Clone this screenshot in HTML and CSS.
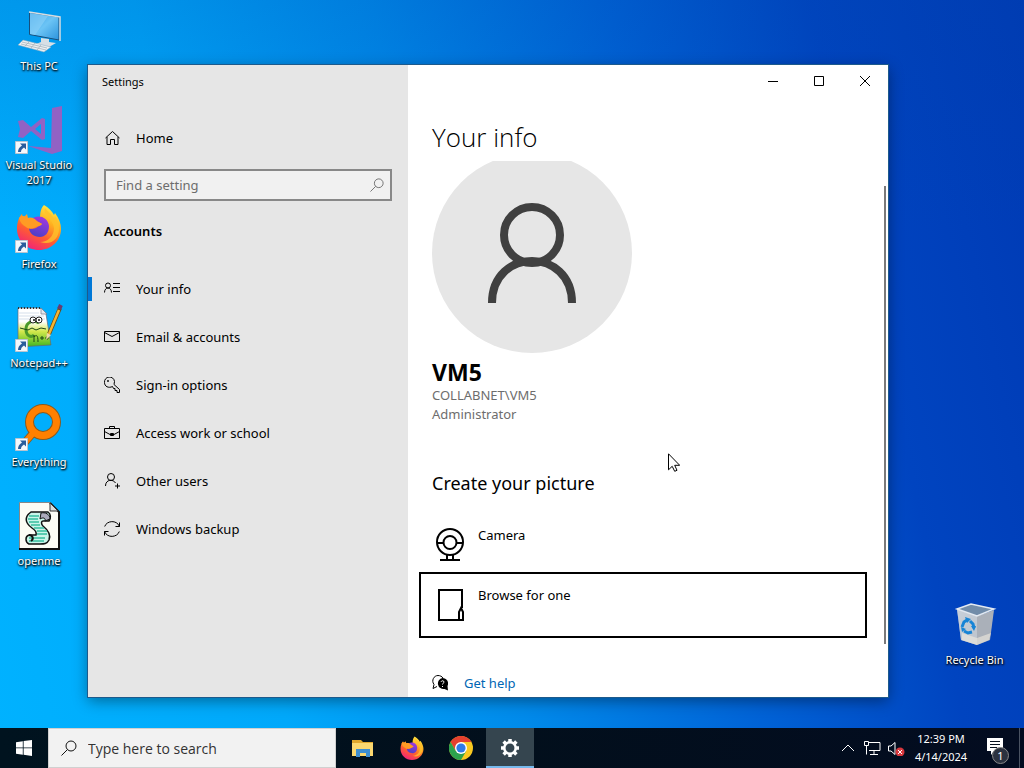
FILE: index.html
```
<!DOCTYPE html>
<html lang="en">
<head>
  <meta charset="UTF-8">
  <meta name="viewport" content="width=device-width, initial-scale=1.0">
  <title>Settings</title>
  <link rel="stylesheet" href="styles.css">
</head>
<body>

  <!-- Shared icons -->
  <svg class="defs" aria-hidden="true">
    <defs>
      <linearGradient id="ffBody" x1="0.8" y1="0" x2="0.3" y2="1">
        <stop offset="0" stop-color="#fff04a"/>
        <stop offset="0.35" stop-color="#ffb01f"/>
        <stop offset="0.65" stop-color="#ff5f2f"/>
        <stop offset="1" stop-color="#f0217c"/>
      </linearGradient>
      <linearGradient id="ffGlobe" x1="0.7" y1="0" x2="0.3" y2="1">
        <stop offset="0" stop-color="#a238e0"/>
        <stop offset="1" stop-color="#4a3fc4"/>
      </linearGradient>
      <linearGradient id="pcScreen" x1="0" y1="0" x2="1" y2="1">
        <stop offset="0" stop-color="#2f9be4"/>
        <stop offset="0.5" stop-color="#6cc4f5"/>
        <stop offset="1" stop-color="#2b93dc"/>
      </linearGradient>
      <linearGradient id="binSide" x1="0" y1="0" x2="1" y2="1">
        <stop offset="0" stop-color="#c3cfdd"/>
        <stop offset="1" stop-color="#a3a8b0"/>
      </linearGradient>
      <linearGradient id="nppPage" x1="0" y1="0" x2="0" y2="1">
        <stop offset="0.35" stop-color="#ffffff"/>
        <stop offset="0.6" stop-color="#d3e84c"/>
        <stop offset="1" stop-color="#3fb51f"/>
      </linearGradient>
    </defs>
    <symbol id="firefox" viewBox="0 0 46 46">
      <path fill="url(#ffBody)" d="M28 1c5 3 8 6 10 10l1-2c4 5 6 11 6 16 0 12-10 21-22 21S1 37 1 25C1 18 3 13 6 10l1 4 4-4 1 4c5-1 8 0 12 3 0-6 0-12 4-16z"/>
      <path fill="url(#ffGlobe)" d="M16 15c6-5 16-2 17 7 0 7-4 11-9 11-6 0-11-4-11-9 2 1 5 1 7 0 2-2 5-2 6-4-3-2-6-2-10-5z"/>
      <path fill="#ff9b24" d="M3 14c3-3 6-2 9 0 3-1 7 0 9 3l5 3c-2 2-6 2-8 4-3 1-6 1-8-1-4-2-6-5-7-9z"/>
      <path fill="#ffc12a" opacity="0.8" d="M29 4c-3 7 8 10 9 20 0 8-6 14-14 14 12 4 19-4 19-13 0-6-2-10-4-13l-1 3c-2-5-6-7-9-11z"/>
    </symbol>
    <symbol id="shortcut" viewBox="0 0 13 13">
      <path fill="#f4f8fc" stroke="#b9c4cf" stroke-width="1" d="M.5.5h12v12H.5z"/>
      <path fill="#2a5d9c" d="M5 2.500h6v6L9 6.500C6.500 8 6 9.500 6 11H3C3 8.500 4 6.500 7 4.500z"/>
    </symbol>
    <symbol id="search" viewBox="0 0 16 16">
      <circle cx="10" cy="6" r="5" fill="none" stroke="currentColor"/>
      <path d="M6.500 9.500.5 15.500" stroke="currentColor" fill="none"/>
    </symbol>
  </svg>

  <main class="desktop">
    <div class="shortcuts">
      <a class="shortcut" href="#">
        <svg viewBox="0 0 48 48">
          <path fill="url(#pcScreen)" stroke="#174f7d" d="M14.500 4.500 44 9v23l-29.500-5.500z"/>
          <path fill="none" stroke="#d6dde2" stroke-width="1.500" d="M14 4l31 5v24"/>
          <path fill="#8fd2f8" opacity="0.600" d="M15 5l18 3-13 19-5-1z"/>
          <path fill="#d7dfe5" d="M26 30l8 1v3l7 1-7 4-13-3 5-2z"/>
          <path fill="#eceff1" stroke="#8aa9bd" stroke-width="0.500" d="M8 32 36 39l-7 5L3 37z"/>
          <path stroke="#a6b4bd" stroke-width="0.800" d="M7 34l25 6M6 36l25 6M14 34l-4 4M20 35l-4 5M26 37l-4 5" fill="none"/>
        </svg>
        <span>This PC</span>
      </a>
      <a class="shortcut" href="#">
        <svg viewBox="0 0 48 48">
          <path fill="#9162c4" d="M37 1l10-2v45l-10 3-24-8 23 2z"/>
          <path fill="#9162c4" fill-rule="evenodd" d="M3 14l5-1 8 7 11-9 3 1v20l-3 1-11-9-8 7-5-1 2-8zM20 22l6 5V17z"/>
          <use href="#shortcut" x="0" y="34" width="13" height="13"/>
        </svg>
        <span>Visual Studio 2017</span>
      </a>
      <a class="shortcut" href="#">
        <svg viewBox="0 0 48 48">
          <use href="#firefox" x="1" y="-2" width="46" height="46"/>
          <use href="#shortcut" x="0" y="34" width="13" height="13"/>
        </svg>
        <span>Firefox</span>
      </a>
      <a class="shortcut" href="#">
        <svg viewBox="0 0 48 48">
          <path fill="url(#nppPage)" stroke="#667" stroke-width="0.700" d="M3 3h22l6 6 5 31-33 2z"/>
          <path fill="#e4e9ef" stroke="#778" stroke-width="0.700" d="M26 3v6h6z"/>
          <path stroke="#333" stroke-width="2" stroke-dasharray="1 2" d="M3 3h22"/>
          <path stroke="#b9c9dd" stroke-width="0.600" d="M4 8h20M4 11h25M4 14h26"/>
          <path fill="none" stroke="#4b9a2a" stroke-width="3" d="M24 18c-5-4-13-1-13 6s5 9 8 6"/>
          <circle cx="18" cy="15" r="3" fill="#fff" stroke="#222"/>
          <circle cx="24" cy="15" r="3" fill="#fff" stroke="#222"/>
          <circle cx="19" cy="15" r="1" fill="#111"/>
          <circle cx="24" cy="15" r="1" fill="#111"/>
          <path fill="none" stroke="#1d4716" d="M5 23l8 2 4-2 4 2 5-2 5 1M19 37v-7M19 32c3-3 4-1 4 5M25 33h4M27 31v4M30 33h4M32 31v4"/>
          <path stroke="#6e4a12" stroke-width="4" d="M34 29 45 3"/>
          <path stroke="#f4b633" stroke-width="2.500" d="M34 29 44 5"/>
          <path stroke="#6a3b70" stroke-width="4" d="M44 4l2-4"/>
          <path fill="#f3d9a5" d="M32 28l4 2-5 5z"/>
          <use href="#shortcut" x="0" y="34" width="13" height="13"/>
        </svg>
        <span>Notepad++</span>
      </a>
      <a class="shortcut" href="#">
        <svg viewBox="0 0 48 48">
          <path stroke="#8c5a1c" stroke-width="8" d="M18 29 6 43"/>
          <circle cx="28" cy="18" r="13.500" fill="none" stroke="#8c5a1c" stroke-width="9"/>
          <path stroke="#ff8000" stroke-width="6" d="M19 28 6 43"/>
          <circle cx="28" cy="18" r="13.500" fill="none" stroke="#ff8000" stroke-width="7"/>
          <use href="#shortcut" x="0" y="34" width="13" height="13"/>
        </svg>
        <span>Everything</span>
      </a>
      <a class="shortcut" href="#">
        <svg viewBox="0 0 48 48">
          <path fill="#fcfcf5" stroke="#888" d="M4.500-.5h31l8 9v37h-39z"/>
          <path fill="none" stroke="#111" stroke-width="2" d="M35 0l9 9v37H4"/>
          <path fill="#ddd" stroke="#333" d="M35 0v8h8z"/>
          <path fill="#c9f5ea" stroke="#111" stroke-width="1.500" d="M16 9h17c3 2 3 6 1 9h-6c-2 0-2 3 0 5 5 4 8 9 6 14-2 4-5 4-9 4H14c-4-2-4-8 0-9h7c1-3-1-5-4-7-7-5-8-11-1-16z"/>
          <path fill="#aab" stroke="#111" d="M26 10c4-1 9 1 9 6l-5 2c1-3-2-4-5-2z"/>
          <path stroke="#36bd9f" stroke-width="1.500" d="M14 13h10M13 16h10M14 19h10M16 22h9M19 25h10M22 28h10M22 31h10M14 35h16M14 38h15"/>
          <path stroke="#111" stroke-width="2" fill="none" d="M14 32c4 0 5 4 2 6"/>
        </svg>
        <span>openme</span>
      </a>
    </div>

    <a class="shortcut recycle-bin" href="#">
      <svg viewBox="0 0 48 48">
        <path fill="url(#binSide)" d="M6 7 26 14v29L10 38z"/>
        <path fill="#aab0b9" d="M26 14 43 8l-4 30-13 5z"/>
        <path fill="#c9d0d8" d="M6 7 26 14v29L10 38z" opacity="0.700"/>
        <path fill="#718ca9" stroke="#e2e9f1" stroke-width="1.500" d="M6 7 20 2l23 5-17 7z"/>
        <path fill="#f0ebe0" opacity="0.600" d="M11 31l15 5 14-5-2 7-12 5-15-5z"/>
        <path fill="none" stroke="#1684d6" stroke-width="3" d="M11 25l2-5 3-2M19 19l3 3 1 4M21 30l-4 1-4-2"/>
        <path fill="#1684d6" d="M14 15l6 2-4 4zM20 24h5l-2 5zM10 25l5 2-4 3z"/>
      </svg>
      <span>Recycle Bin</span>
    </a>

    <!-- Settings window -->
    <section class="window">
      <aside class="sidebar">
        <div class="window-title">Settings</div>
        <a class="nav-item" href="#">
          <svg viewBox="0 0 16 16"><path d="M1.500 8 8.500 1.500 15.500 8M3 7v7.500h3.500v-5h4v5H14V7"/></svg>
          Home
        </a>
        <div class="find">
          <input type="text" placeholder="Find a setting" aria-label="Find a setting">
          <svg><use href="#search"/></svg>
        </div>
        <h2>Accounts</h2>
        <nav>
          <a class="nav-item active" href="#">
            <svg viewBox="0 0 16 16"><circle cx="4" cy="4.500" r="2.500"/><path d="M.5 11.500c0-6 7-6 7 0M9 2.500h7M9 6.500h7M9 10.500h7"/></svg>
            Your info
          </a>
          <a class="nav-item" href="#">
            <svg viewBox="0 0 16 16"><path d="M.5 2.500h15v10H.5zM.5 3.500l7.500 4 7.500-4"/></svg>
            Email &amp; accounts
          </a>
          <a class="nav-item" href="#">
            <svg viewBox="0 0 16 16"><path d="M8.500 9.500c-4 2-8 0-8-4a5 5 0 0 1 10-1l-.5 3 5.500 5v3H13v-2h-2v-2H9.500z"/><circle cx="4" cy="4" r="0.600"/></svg>
            Sign-in options
          </a>
          <a class="nav-item" href="#">
            <svg viewBox="0 0 16 16"><path d="M.5 3.500h15v10H.5zM5.500 3.500v-2h5v2M.5 6.500l5.500 3h4l5.500-3M6.500 8.500h3v2h-3z"/></svg>
            Access work or school
          </a>
          <a class="nav-item" href="#">
            <svg viewBox="0 0 16 16"><circle cx="7" cy="4" r="3.500"/><path d="M1.500 13c0-7 8-7 10-3M13.500 10.500v5M11 13h5"/></svg>
            Other users
          </a>
          <a class="nav-item" href="#">
            <svg viewBox="0 0 16 16"><path d="M.7 5.500c2-6 12-7 14.800 0M15.500 1.500v4h-4M15.300 10.500c-2 6-12 7-14.800 0M.5 14.500v-4h4"/></svg>
            Windows backup
          </a>
        </nav>
      </aside>

      <div class="content">
        <div class="window-controls">
          <button type="button" aria-label="Minimize"><svg viewBox="0 0 10 10"><path d="M0 5.500h10"/></svg></button>
          <button type="button" aria-label="Maximize"><svg viewBox="0 0 10 10"><path d="M.5.5h9v9h-9z"/></svg></button>
          <button type="button" aria-label="Close"><svg viewBox="0 0 10 10"><path d="M0 0l10 10M10 0 0 10"/></svg></button>
        </div>
        <h1>Your info</h1>
        <div class="page">
          <svg class="avatar" viewBox="0 0 200 200">
            <circle cx="100" cy="100" r="100" fill="#e6e6e6"/>
            <circle cx="100" cy="82" r="28"/>
            <path d="M60 150c0-56 80-56 80 0"/>
          </svg>
          <div class="user-name">VM5</div>
          <div class="user-info">COLLABNET\VM5</div>
          <div class="user-info">Administrator</div>

          <h3>Create your picture</h3>
          <button type="button" class="tile">
            <svg viewBox="0 0 28 33"><circle cx="14" cy="14" r="13"/><circle cx="14" cy="14.500" r="6.500"/><path d="M1 15h7M20 15h7M11 27v5M17 27v5M4 32h20"/></svg>
            Camera
          </button>
          <button type="button" class="tile focused">
            <svg viewBox="0 0 28 33"><path d="M26 20V2H3v30h20M23 32v-8l2-4 2 4v8z"/></svg>
            Browse for one
          </button>
          <div class="help">
            <svg viewBox="0 0 16 16">
              <path fill="none" stroke="#000" d="M5 11.500l-4 2 1-4c-3-4 0-9 4-9 2 0 4 1 5 2.500"/>
              <path d="M10.500 3a5.500 5.500 0 0 1 5 8l.5 4.500-3.500-1.500A5.500 5.500 0 1 1 10.500 3z"/>
              <path fill="none" stroke="#fff" d="M9 6.800c.5-1.500 3-1.300 3 .2 0 1.200-1.500 1.200-1.500 2.500M10.500 11v1"/>
            </svg>
            <a href="#">Get help</a>
          </div>
        </div>
        <div class="scrollbar"></div>
      </div>
    </section>

    <svg class="cursor" viewBox="0 0 12 19"><path fill="#fff" stroke="#000" d="M.5.800v16l3.700-3.500 2.500 5 2.300-1-2.300-5h5z"/></svg>
  </main>

  <!-- Taskbar -->
  <footer class="taskbar">
    <button type="button" class="start" aria-label="Start">
      <svg viewBox="0 0 16 16"><path d="M0 2.200 6.800 1.200v6.300H0zM7.600 1.100 16 0v7.500H7.600zM0 8.300h6.800v6.500L0 13.800zM7.600 8.300H16V16l-8.400-1.200z"/></svg>
    </button>
    <div class="task-search">
      <svg><use href="#search"/></svg>
      <input type="text" placeholder="Type here to search" aria-label="Type here to search">
    </div>
    <div class="apps">
      <button type="button" aria-label="File Explorer">
        <svg viewBox="0 0 24 24">
          <path fill="#e0a82e" d="M1 4h9l2 2h10v4H1z"/>
          <path fill="#fbd870" d="M1 7h21v13H1z"/>
          <path fill="#3e8ed0" d="M5 13h14v8h-4v-4H9v4H5z"/>
        </svg>
      </button>
      <button type="button" aria-label="Firefox"><svg><use href="#firefox"/></svg></button>
      <button type="button" aria-label="Chrome">
        <svg viewBox="0 0 24 24">
          <circle cx="12" cy="12" r="12" fill="#f9c921"/>
          <path fill="#e5402f" d="M1.600 6A12 12 0 0 1 22.400 6H12L6.800 15z"/>
          <path fill="#2da24d" d="M1.600 6A12 12 0 0 0 12 24l5.200-9H6.800z"/>
          <circle cx="12" cy="12" r="6" fill="#fff"/>
          <circle cx="12" cy="12" r="4.600" fill="#2f7be8"/>
        </svg>
      </button>
      <button type="button" class="running" aria-label="Settings">
        <svg viewBox="0 0 24 24">
          <circle cx="12" cy="12" r="5.700" fill="none" stroke="#fff" stroke-width="2.500"/>
          <path stroke="#fff" stroke-width="3.500" d="M12 3v3M12 18v3M3 12h3M18 12h3M5.600 5.600l2.200 2.200M16.200 16.200l2.200 2.200M18.400 5.600l-2.200 2.200M7.800 16.200l-2.200 2.200"/>
        </svg>
      </button>
    </div>
    <div class="tray">
      <svg class="tray-icon" viewBox="0 0 18 16"><path d="M3 11l6-6 6 6"/></svg>
      <svg class="tray-icon" viewBox="0 0 18 16"><path d="M5 2.500h12v8H6M11 10.500v4M7 14.500h8M1.500 1.500h4v4h-4zM3.500 5.500v9"/></svg>
      <svg class="tray-icon" viewBox="0 0 18 16"><path d="M1.500 6v5H4l4 3.500v-12L4 6z"/><circle cx="13" cy="12" r="4.500" fill="#d8383e" stroke="none"/><path d="M11 10l4 4M15 10l-4 4"/></svg>
      <div class="clock">
        <span>12:39 PM</span>
        <span>4/14/2024</span>
      </div>
      <button type="button" class="notifications" aria-label="Notifications">
        <svg viewBox="0 0 16 17"><path fill="#fff" d="M0 0h16v13H7l-3 4v-4H0z"/><path stroke="#06101f" d="M3 3.500h10M3 6.500h10M3 9.500h7"/></svg>
        <span class="badge">1</span>
      </button>
      <div class="show-desktop"></div>
    </div>
  </footer>

</body>
</html>
```
FILE: styles.css
```
* {
  box-sizing: border-box;
}
body {
  margin: 0;
  height: 100vh;
  display: flex;
  flex-direction: column;
  overflow: hidden;
  font-family: "Noto Sans", "Open Sans", sans-serif;
  font-size: 13px;
  color: #000;
  background:
    linear-gradient(rgba(0, 70, 170, 0.2), transparent 30%),
    linear-gradient(78deg, #00b2ff 0%, #00a8fa 25%, #008aea 45%, #0062d6 65%, #0044c0 82%, #003ab4 100%);
}
h1, h2, h3 {
  margin: 0;
}
a {
  color: inherit;
  text-decoration: none;
}
button {
  padding: 0;
  border: none;
  background: none;
  font-family: inherit;
  color: inherit;
}
input {
  min-width: 0;
  flex: 1;
  padding: 0;
  border: none;
  outline: none;
  background: none;
  font-family: inherit;
  font-size: 13px;
}
.defs {
  position: absolute;
  width: 0;
  height: 0;
}

/* Desktop */
.desktop {
  position: relative;
  flex: 1;
  min-height: 0;
}
.shortcuts {
  display: flex;
  flex-direction: column;
  width: 78px;
}
.shortcut {
  display: flex;
  flex-direction: column;
  align-items: center;
  gap: 2px;
  height: 99px;
  padding-top: 8px;
  color: #fff;
  font-size: 11px;
  line-height: 15px;
  text-align: center;
  text-shadow: 1px 1px 2px #000, 0 1px 2px #000;
}
.shortcut svg {
  width: 48px;
  height: 48px;
  overflow: visible;
}
.recycle-bin {
  position: absolute;
  right: 12px;
  bottom: 35px;
  width: 75px;
}

/* Settings window */
.window {
  position: absolute;
  top: 65px;
  right: 136px;
  bottom: 31px;
  left: 88px;
  display: flex;
  background: #fff;
  box-shadow: 0 0 0 1px #1d5a8c, 0 4px 14px rgba(0, 0, 0, 0.4);
}
.sidebar {
  width: 40%;
  background: #e6e6e6;
}
.window-title {
  height: 49px;
  padding-left: 14px;
  font-size: 11px;
  line-height: 34px;
}
.nav-item {
  display: flex;
  align-items: center;
  gap: 16px;
  height: 48px;
  padding-left: 16px;
}
.nav-item svg {
  width: 16px;
  height: 16px;
  fill: none;
  stroke: #000;
}
.nav-item.active {
  background: linear-gradient(#0078d7, #0078d7) left center / 4px 24px no-repeat;
}
.find {
  display: flex;
  align-items: center;
  height: 32px;
  margin: 7px 16px 20px;
  padding: 0 6px 0 10px;
  border: 2px solid #888;
  background: #f1f1f1;
}
.find svg {
  width: 14px;
  height: 14px;
  color: #666;
}
.find input::placeholder {
  color: #6d6d6d;
}
h2 {
  margin: 0 16px 24px;
  font-size: 13px;
  line-height: 20px;
  font-weight: 600;
}
.content {
  position: relative;
  flex: 1;
  display: flex;
  flex-direction: column;
  padding-left: 24px;
}
.window-controls {
  display: flex;
  justify-content: flex-end;
  height: 32px;
}
.window-controls button {
  width: 46px;
}
.window-controls svg {
  width: 10px;
  height: 10px;
  fill: none;
  stroke: #000;
}
h1 {
  height: 64px;
  padding-top: 22px;
  font-family: "Open Sans", sans-serif;
  font-size: 26px;
  line-height: 36px;
  font-weight: 300;
}
.page {
  flex: 1;
  min-height: 0;
  margin-left: -14px;
  padding: 0 24px 0 14px;
  overflow: hidden;
}
.avatar {
  display: block;
  width: 200px;
  height: 200px;
  margin-top: -8px;
  fill: none;
  stroke: #404040;
  stroke-width: 8px;
}
.avatar circle:first-child {
  stroke: none;
}
.user-name {
  margin-top: 5px;
  font-size: 23px;
  line-height: 28px;
  font-weight: 700;
}
.user-info {
  color: #6d6d6d;
  line-height: 19px;
}
h3 {
  margin: 45px 0 18px;
  font-size: 18px;
  line-height: 28px;
  font-weight: 400;
}
.tile {
  display: flex;
  gap: 14px;
  width: calc(100% + 10px);
  height: 60px;
  margin-left: -10px;
  padding: 10px 14px;
  font-size: 13px;
  line-height: 20px;
}
.tile svg {
  width: 28px;
  height: 33px;
  margin-top: 3px;
  fill: none;
  stroke: #000;
  stroke-width: 2px;
}
.tile.focused {
  outline: 2px solid #000;
  outline-offset: 1px;
}
.help {
  display: flex;
  align-items: center;
  gap: 16px;
  margin-top: 38px;
  line-height: 20px;
  color: #0066b4;
}
.help svg {
  width: 16px;
  height: 16px;
  fill: #000;
}
.scrollbar {
  position: absolute;
  top: 121px;
  right: 2px;
  bottom: 53px;
  width: 2px;
  background: #7a7a7a;
}
.cursor {
  position: absolute;
  top: 453px;
  left: 668px;
  width: 12px;
  height: 19px;
}

/* Taskbar */
.taskbar {
  display: flex;
  height: 40px;
  color: #fff;
  background: linear-gradient(90deg, #00131f, #020f1c 50%, #030c20);
}
.start {
  width: 48px;
}
.start svg {
  display: block;
  width: 16px;
  height: 16px;
  margin: 0 auto;
  fill: #fff;
}
.task-search {
  display: flex;
  align-items: center;
  gap: 11px;
  width: 288px;
  padding-left: 12px;
  background: #f2f2f2;
  border: 1px solid #d0d0d0;
  color: #111;
}
.task-search svg {
  width: 16px;
  height: 16px;
}
.task-search input {
  font-family: "Open Sans", sans-serif;
  font-size: 14px;
}
.task-search input::placeholder {
  color: #333;
}
.apps {
  display: flex;
  gap: 1px;
  margin-left: 3px;
}
.apps button {
  width: 48px;
}
.apps svg {
  display: block;
  width: 24px;
  height: 24px;
  margin: 0 auto;
}
.apps .running {
  background: #35454f;
  box-shadow: inset 0 -2px #76b9ed;
}
.tray {
  display: flex;
  align-items: center;
  margin-left: auto;
}
.tray-icon {
  width: 18px;
  height: 16px;
  margin-right: 6px;
  fill: none;
  stroke: #fff;
}
.clock {
  display: flex;
  flex-direction: column;
  width: 60px;
  font-size: 11px;
  line-height: 18px;
  text-align: center;
}
.notifications {
  position: relative;
  width: 48px;
  height: 40px;
}
.notifications svg {
  width: 16px;
  height: 17px;
}
.badge {
  position: absolute;
  left: 21px;
  bottom: 4px;
  width: 17px;
  height: 17px;
  border: 1px solid #888;
  border-radius: 50%;
  background: #2b3240;
  color: #fff;
  font-size: 11px;
  line-height: 15px;
}
.show-desktop {
  width: 5px;
  height: 40px;
  border-left: 1px solid #4a5362;
}
```
